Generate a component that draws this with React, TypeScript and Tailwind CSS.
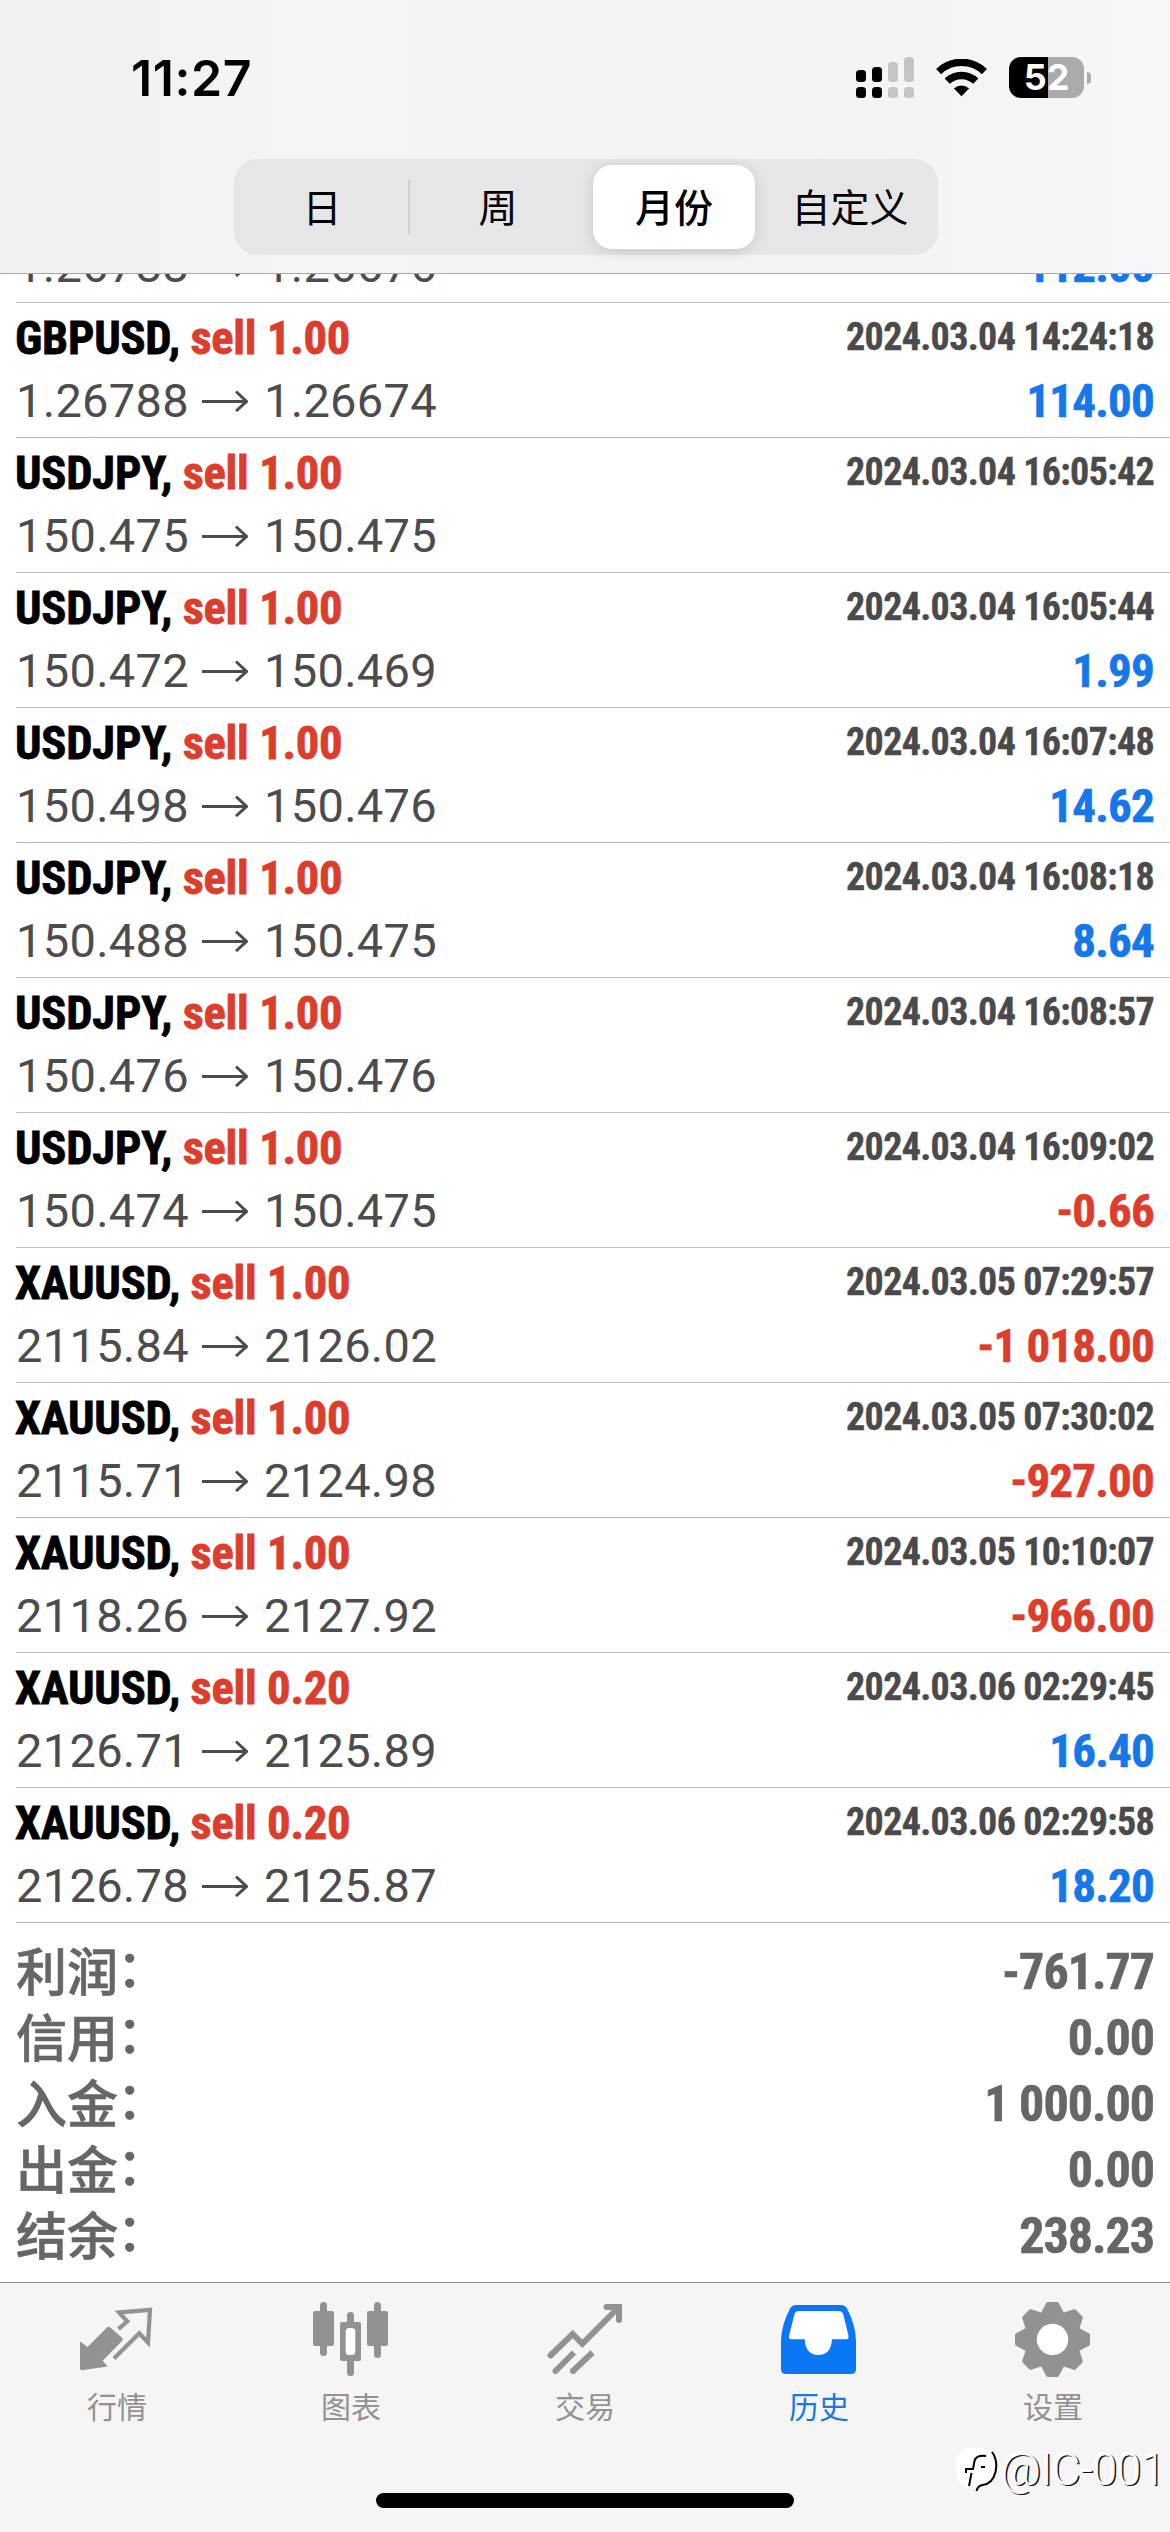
import React from 'react';
import clsx from 'clsx';

type Deal = {
  symbol: string;
  volume: string;
  open: string;
  close: string;
  time: string;
  profit?: string;
};

const deals: Deal[] = [
  { symbol: 'GBPUSD', volume: '1.00', open: '1.26788', close: '1.26674', time: '2024.03.04 14:24:18', profit: '114.00' },
  { symbol: 'USDJPY', volume: '1.00', open: '150.475', close: '150.475', time: '2024.03.04 16:05:42' },
  { symbol: 'USDJPY', volume: '1.00', open: '150.472', close: '150.469', time: '2024.03.04 16:05:44', profit: '1.99' },
  { symbol: 'USDJPY', volume: '1.00', open: '150.498', close: '150.476', time: '2024.03.04 16:07:48', profit: '14.62' },
  { symbol: 'USDJPY', volume: '1.00', open: '150.488', close: '150.475', time: '2024.03.04 16:08:18', profit: '8.64' },
  { symbol: 'USDJPY', volume: '1.00', open: '150.476', close: '150.476', time: '2024.03.04 16:08:57' },
  { symbol: 'USDJPY', volume: '1.00', open: '150.474', close: '150.475', time: '2024.03.04 16:09:02', profit: '-0.66' },
  { symbol: 'XAUUSD', volume: '1.00', open: '2115.84', close: '2126.02', time: '2024.03.05 07:29:57', profit: '-1 018.00' },
  { symbol: 'XAUUSD', volume: '1.00', open: '2115.71', close: '2124.98', time: '2024.03.05 07:30:02', profit: '-927.00' },
  { symbol: 'XAUUSD', volume: '1.00', open: '2118.26', close: '2127.92', time: '2024.03.05 10:10:07', profit: '-966.00' },
  { symbol: 'XAUUSD', volume: '0.20', open: '2126.71', close: '2125.89', time: '2024.03.06 02:29:45', profit: '16.40' },
  { symbol: 'XAUUSD', volume: '0.20', open: '2126.78', close: '2125.87', time: '2024.03.06 02:29:58', profit: '18.20' },
];

const totals = [
  { label: '利润', value: '-761.77' },
  { label: '信用', value: '0.00' },
  { label: '入金', value: '1 000.00' },
  { label: '出金', value: '0.00' },
  { label: '结余', value: '238.23' },
];

const periods = ['日', '周', '月份', '自定义'];

function StatusBar() {
  return (
    <div className="flex items-start justify-between pt-[57px] pl-[131px] pr-[79px] h-[98px]">
      <span className="font-['Inter',sans-serif] text-[50px] leading-[42px] font-semibold tracking-[0.6px] text-black">11:27</span>
      <div className="flex items-center h-[41px]">
        <svg width="58" height="41" viewBox="0 0 58 41">
          <g fill="#000">
            <rect x="0" y="13" width="10" height="12" rx="3.5" />
            <rect x="0" y="30" width="10" height="11" rx="3.5" />
            <rect x="16" y="10" width="10" height="15" rx="3.5" />
            <rect x="16" y="30" width="10" height="11" rx="3.5" />
          </g>
          <g fill="#c4c4c5">
            <rect x="32" y="5" width="10" height="20" rx="3.5" />
            <rect x="32" y="30" width="10" height="11" rx="3.5" />
            <rect x="48" y="0" width="10" height="25" rx="3.5" />
            <rect x="48" y="30" width="10" height="11" rx="3.5" />
          </g>
        </svg>
        <svg className="ml-[22px]" width="51" height="38" viewBox="0 0 51 38">
          <g fill="none" stroke="#000" strokeWidth="7.4">
            <path d="M2.6 12.6a33 33 0 0 1 45.8 0" />
            <path d="M11.2 22.2a20.6 20.6 0 0 1 28.6 0" />
          </g>
          <path d="M25.5 37.2 17.9 29.6a11 11 0 0 1 15.2 0z" />
        </svg>
        <div className="ml-[22px] flex items-center">
          <div className="flex items-center justify-center w-[75px] h-[41px] rounded-[12px] bg-[linear-gradient(90deg,#000_52%,#ababad_52%)]">
            <span className="font-['Inter',sans-serif] text-[36px] leading-[41px] font-bold text-white">52</span>
          </div>
          <div className="ml-[3px] w-[4px] h-[12px] rounded-r-full bg-[#ababad]" />
        </div>
      </div>
    </div>
  );
}

function PeriodControl({ active }: { active: string }) {
  return (
    <div className="ml-[234px] mt-[61px] flex w-[704px] h-[96px] rounded-[24px] bg-[#e6e6e7]">
      {periods.map((period, i) => (
        <div key={period} className="relative flex flex-1 items-center justify-center">
          {i === 0 && <div className="absolute right-0 top-[21px] w-[2px] h-[54px] bg-[#cfcfd1]" />}
          <div
            className={clsx(
              "flex items-center justify-center w-[162px] h-[84px] pb-[4px] rounded-[19px] font-['Noto_Sans_CJK_SC',sans-serif] text-[39px] leading-[80px] text-black whitespace-nowrap",
              period === active ? 'bg-white font-medium shadow-[0_3px_16px_rgba(0,0,0,0.13)]' : 'font-normal'
            )}
          >
            {period}
          </div>
        </div>
      ))}
    </div>
  );
}

function PriceLine({ open, close, profit }: { open: string; close: string; profit?: string }) {
  const loss = profit?.startsWith('-');
  return (
    <div className="flex items-start justify-between text-[47px] leading-[56px] whitespace-pre">
      <div className="flex items-start tracking-[0.3px] text-[#4c4c4f] font-['Roboto',sans-serif]">
        <span>{open}</span>
        <svg className="mt-[17px] ml-[13px] mr-[16px]" width="46" height="22" viewBox="0 0 46 22" fill="none" stroke="#4c4c4f" strokeWidth="3">
          <path d="M0 11.5h44M34 1.5l10.500 10L34 21" />
        </svg>
        <span>{close}</span>
      </div>
      {profit && (
        <div className={clsx('font-bold tracking-[-0.8px] [-webkit-text-stroke:0.6px]', loss ? 'text-[#dc3e2e]' : 'text-[#1577ea]')}>
          {profit}
        </div>
      )}
    </div>
  );
}

function DealRow({ deal }: { deal: Deal }) {
  return (
    <div className="ml-[16px] h-[135px] shrink-0 border-b border-[#c0c0c2] pr-[16px]">
      <div className="flex items-start justify-between font-bold whitespace-pre">
        <div className="-ml-px text-[46.5px] leading-[70px] tracking-[-0.2px] [-webkit-text-stroke:0.8px]">
          <span className="text-black">{deal.symbol}, </span>
          <span className="text-[#dc3e2e]">sell {deal.volume}</span>
        </div>
        <div className="text-[38px] leading-[68px] tracking-[-0.66px] text-[#4a4a4d] [-webkit-text-stroke:0.4px]">{deal.time}</div>
      </div>
      <PriceLine open={deal.open} close={deal.close} profit={deal.profit} />
    </div>
  );
}

function Totals() {
  return (
    <div className="px-[16px] pt-[16px] text-[#666]">
      {totals.map(t => (
        <div key={t.label} className="flex h-[66px] items-start justify-between">
          <div className="font-['Noto_Sans_CJK_SC',sans-serif] text-[51px] leading-[60px] font-medium [-webkit-text-stroke:0.6px]">
            {t.label}
            <span className="relative -top-[4px] -left-px">：</span>
          </div>
          <div className="text-[50px] leading-[67px] font-bold tracking-[-1px] [-webkit-text-stroke:0.6px]">{t.value}</div>
        </div>
      ))}
    </div>
  );
}

function QuotesIcon() {
  return (
    <svg width="80" height="80" viewBox="0 0 80 80">
      <path fill="currentColor" d="M3 41.5 10.5 47 30 27.5q1.7-1.7 3.4 0L45 37.700q1.500 1.600 0 3.200L25.700 60.700l5 5.800L5 70.300q-2 .2-2-2z" />
      <path fill="none" stroke="currentColor" strokeWidth="4.200" d="M41.500 29 50.300 21.300 42 12.500 73 9.800 71 42.500 62.300 33.300 37 58.500" />
    </svg>
  );
}

function ChartIcon() {
  return (
    <svg width="80" height="80" viewBox="0 0 80 80" fill="currentColor">
      <rect x="9" y="2" width="7" height="54" rx="3.5" />
      <rect x="2" y="11" width="21" height="35" rx="2" />
      <rect x="36" y="12" width="7" height="64" rx="3.5" />
      <rect x="29" y="22" width="21" height="39" rx="2" />
      <rect x="34.700" y="28" width="9.600" height="27" rx="3.5" fill="#fff" />
      <rect x="63" y="2" width="7" height="56" rx="3.5" />
      <rect x="56" y="11" width="21" height="35" rx="2" />
    </svg>
  );
}

function TradeIcon() {
  return (
    <svg width="80" height="80" viewBox="0 0 80 80" fill="none" stroke="currentColor" strokeWidth="6">
      <path strokeLinecap="round" d="M5.500 55.500 27.700 34l9.600 9.800L73 8M61.500 7H74v13" />
      <path d="M10.500 71 29 52.500M28 71 47.500 52.500" />
      <g fill="currentColor" stroke="none">
        <circle cx="10.500" cy="71" r="3" />
        <circle cx="28" cy="71" r="3" />
      </g>
    </svg>
  );
}

function HistoryIcon() {
  return (
    <svg width="80" height="80" viewBox="0 0 80 80">
      <path fill="#0a78f5" d="M17 5h45q4 0 6 3.500Q77 26 77 41v28q0 5-5 5H7q-5 0-5-5V41Q2 26 11 8.500 13 5 17 5z" />
      <path fill="#fff" d="M20 11h39.500q3.500 0 4.700 3L69.500 36q.5 3.200-2.500 3.200H53q-1 15.800-13.700 15.800T25.700 39.200H12.500q-3 0-2.500-3.200l5.500-22q1-3 4.500-3z" />
    </svg>
  );
}

function SettingsIcon() {
  return (
    <svg width="80" height="80" viewBox="-39.500 -39.500 80 80" fill="currentColor">
      <g stroke="currentColor" strokeWidth="4" strokeLinejoin="round">
        {[0, 45, 90, 135, 180, 225, 270, 315].map(a => (
          <path key={a} transform={`rotate(${a})`} d="M-4.500-35.500h9L9-27v7H-9v-7z" />
        ))}
      </g>
      <circle r="29.500" />
      <circle r="15.700" fill="#fff" />
    </svg>
  );
}

const tabs = [
  { label: '行情', icon: QuotesIcon },
  { label: '图表', icon: ChartIcon },
  { label: '交易', icon: TradeIcon },
  { label: '历史', icon: HistoryIcon, active: true },
  { label: '设置', icon: SettingsIcon },
];

function Watermark() {
  return (
    <div className="absolute right-[5px] bottom-[37px] flex items-center">
      <svg width="46" height="50" viewBox="0 0 46 50">
        <rect x="3" y="3" width="39" height="39" rx="14" fill="#fff" />
        <g fill="none" stroke="#000" strokeWidth="2">
          <path d="M33 11q-10-1-11.500 5L20 24h-7v4M18.500 28 16 41" />
          <path d="M39 7q6 8 3.500 20-3 12-13 13-5 1-6 6" />
          <path d="M28 22h4" />
        </g>
      </svg>
      <span className="ml-[2px] font-['Roboto',sans-serif] text-[44px] leading-[50px] font-light tracking-[-0.3px] text-[#f9f9f9] [text-shadow:1.5px_1px_0_#111,-1px_-1px_0_#fff]">
        @IC-001
      </span>
    </div>
  );
}

function TabBar() {
  return (
    <div className="relative mt-auto h-[250px] border-t border-[#8f8f91] bg-[#f5f5f5] flex flex-col">
      <div className="grid grid-cols-5 pt-[17px]">
        {tabs.map(({ label, icon: Icon, active }) => (
          <div key={label} className={clsx('flex flex-col items-center', active ? 'text-[#1a78e6]' : 'text-[#929292]')}>
            <Icon />
            <span className="mt-[10px] font-['Noto_Sans_CJK_SC',sans-serif] text-[30px] leading-[30px]">{label}</span>
          </div>
        ))}
      </div>
      <div className="mx-auto mt-auto mb-[24px] w-[418px] h-[15px] rounded-full bg-black" />
      <Watermark />
    </div>
  );
}

export default function App() {
  return (
    <div className="flex flex-col w-[1170px] h-[2532px] overflow-hidden bg-white font-['Roboto_Condensed','Liberation_Sans',sans-serif]">
      <div className="h-[274px] shrink-0 border-b border-[#a8a8aa] bg-[linear-gradient(90deg,#f0f0f0_0%,#f4f2f3_17%,#f5f5f5_24%,#f4f4f5_70%,#f6f6fb_100%)]">
        <StatusBar />
        <PeriodControl active="月份" />
      </div>
      {/* row scrolled halfway under the header */}
      <div className="ml-[16px] flex h-[29px] shrink-0 flex-col justify-end overflow-hidden border-b border-[#c0c0c2] pr-[16px] pb-[8px]">
        <PriceLine open="1.26788" close="1.26676" profit="112.00" />
      </div>
      {deals.map(deal => (
        <DealRow key={deal.time} deal={deal} />
      ))}
      <Totals />
      <TabBar />
    </div>
  );
}
